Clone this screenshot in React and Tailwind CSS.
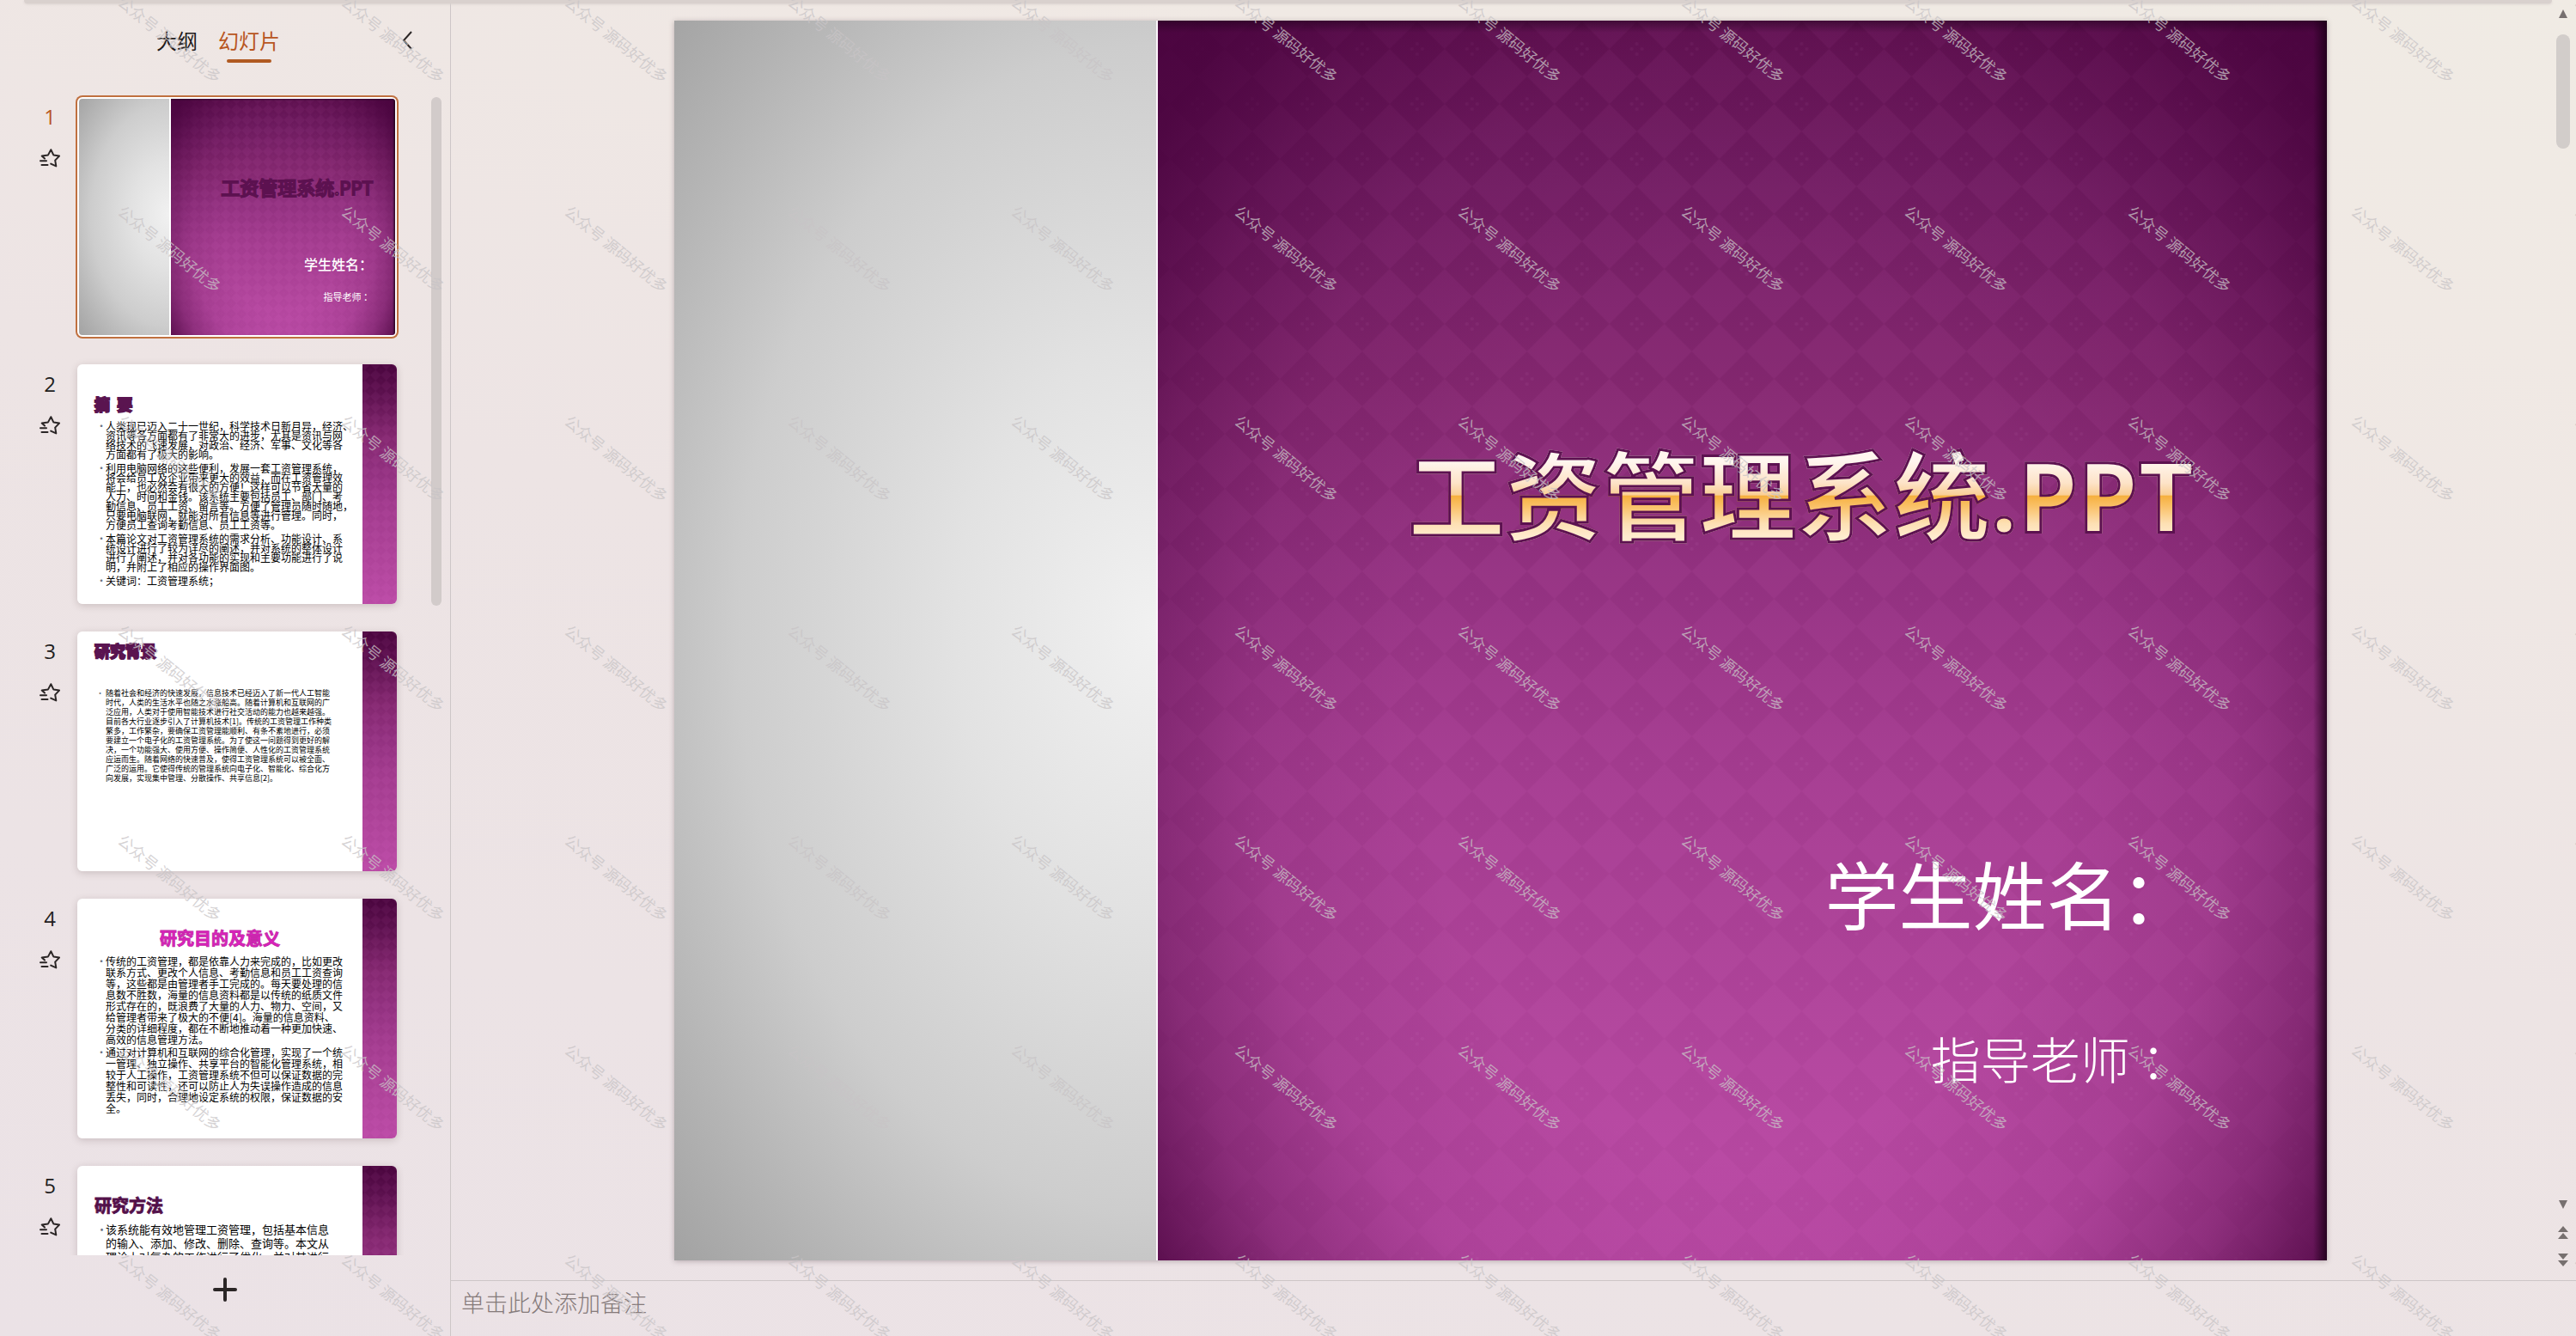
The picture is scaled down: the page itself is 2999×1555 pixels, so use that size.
import React, { useId } from "react";

const WATERMARK_TEXT = "公众号 源码好优多";

const SLIDES = [
  { id: 1, kind: "cover" },
  {
    id: 2,
    title: "摘  要",
    titleClass: "mt-9 pl-5 text-[18px] text-[#4f1046] [-webkit-text-stroke:2px_#5a1450]",
    bodyClass: "mt-2.5 gap-[5px] text-[12px] leading-[11px]",
    paragraphs: [
      [
        "人类现已迈入二十一世纪，科学技术日新月异，经济、",
        "资讯等各方面都有了非常大的进步，尤其是资讯与网",
        "络技术的飞速发展，对政治、经济、军事、文化等各",
        "方面都有了极大的影响。",
      ],
      [
        "利用电脑网络的这些便利，发展一套工资管理系统，",
        "将会给员工及企业带来更大的效益，而在工资管理效",
        "能上，也必然会有很大的方便！这样可以节省大量的",
        "人力、时间和金钱。该系统主要包括员工、部门、考",
        "勤信息、员工工资、留言等。方便了管理员随时随地，",
        "只要电脑联网，就能对所有信息等进行管理。同时，",
        "方便员工查询考勤信息、员工工资等。",
      ],
      [
        "本篇论文对工资管理系统的需求分析、功能设计、系",
        "统设计进行了较为详尽的阐述，并对系统的整体设计",
        "进行了阐述，并对各功能的实现和主要功能进行了说",
        "明，并附上了相应的操作界面图。",
      ],
      ["关键词：工资管理系统；"],
    ],
  },
  {
    id: 3,
    title: "研究背景",
    titleClass: "mt-3 pl-5 text-[18px] text-[#4f1046] [-webkit-text-stroke:2px_#5a1450]",
    bodyClass: "mt-[34px] text-[9px] leading-[11px]",
    paragraphs: [
      [
        "随着社会和经济的快速发展，信息技术已经迈入了新一代人工智能",
        "时代，人类的生活水平也随之水涨船高。随着计算机和互联网的广",
        "泛应用，人类对于使用智能技术进行社交活动的能力也越来越强。",
        "目前各大行业逐步引入了计算机技术[1]。传统的工资管理工作种类",
        "繁多，工作繁杂，要确保工资管理能顺利、有条不紊地进行，必须",
        "要建立一个电子化的工资管理系统。为了使这一问题得到更好的解",
        "决，一个功能强大、使用方便、操作简便、人性化的工资管理系统",
        "应运而生。随着网络的快速普及，使得工资管理系统可以被全面、",
        "广泛的运用。它使得传统的管理系统向电子化、智能化、综合化方",
        "向发展，实现集中管理、分散操作、共享信息[2]。",
      ],
    ],
  },
  {
    id: 4,
    title: "研究目的及意义",
    titleClass: "mt-9 text-center text-[20px] text-[#e01fc0] [-webkit-text-stroke:1px_#c42aa8]",
    bodyClass: "mt-2.5 gap-[2px] text-[12px] leading-[13px]",
    paragraphs: [
      [
        "传统的工资管理，都是依靠人力来完成的，比如更改",
        "联系方式、更改个人信息、考勤信息和员工工资查询",
        "等，这些都是由管理者手工完成的。每天要处理的信",
        "息数不胜数，海量的信息资料都是以传统的纸质文件",
        "形式存在的，既浪费了大量的人力、物力、空间，又",
        "给管理者带来了极大的不便[4]。海量的信息资料、",
        "分类的详细程度，都在不断地推动着一种更加快速、",
        "高效的信息管理方法。",
      ],
      [
        "通过对计算机和互联网的综合化管理，实现了一个统",
        "一管理、独立操作、共享平台的智能化管理系统，相",
        "较于人工操作，工资管理系统不但可以保证数据的完",
        "整性和可读性，还可以防止人为失误操作造成的信息",
        "丢失，同时，合理地设定系统的权限，保证数据的安",
        "全。",
      ],
    ],
  },
  {
    id: 5,
    title: "研究方法",
    titleClass: "mt-9 pl-5 text-[20px] text-[#4f1046] [-webkit-text-stroke:1px_#5a1450]",
    bodyClass: "mt-2.5 text-[13px] leading-[16px]",
    paragraphs: [
      [
        "该系统能有效地管理工资管理，包括基本信息",
        "的输入、添加、修改、删除、查询等。本文从",
        "理论上对复杂的工作进行了优化，并对其进行",
      ],
    ],
  },
];

/* Decorative artwork of the purple theme, shared by cover and content slides. */
function PurpleArt({ viewBox, width, vignette, className }) {
  const id = useId();
  return (
    <svg viewBox={viewBox} preserveAspectRatio="none" className={className} aria-hidden="true">
      <defs>
        <linearGradient id={`${id}-base`} x1="0" y1="0" x2="0" y2="1">
          <stop offset="0" stopColor={vignette ? "#631353" : "#4a053e"} />
          <stop offset="0.12" stopColor={vignette ? "#701c61" : "#5c104e"} />
          <stop offset="0.3" stopColor="#83276f" />
          <stop offset="0.45" stopColor="#923180" />
          <stop offset="0.6" stopColor="#a23b8e" />
          <stop offset="0.85" stopColor="#b1459c" />
          <stop offset="1" stopColor="#ba4aa5" />
        </linearGradient>
        <radialGradient
          id={`${id}-vig`}
          gradientUnits="userSpaceOnUse"
          cx="0"
          cy="0"
          r="1"
          gradientTransform="translate(681 800) scale(950 1300)"
        >
          <stop offset="0" stopColor="#48033d" stopOpacity="0" />
          <stop offset="0.4" stopColor="#48033d" stopOpacity="0" />
          <stop offset="0.6" stopColor="#48033d" stopOpacity="0.12" />
          <stop offset="0.74" stopColor="#48033d" stopOpacity="0.4" />
          <stop offset="0.88" stopColor="#48033d" stopOpacity="0.85" />
          <stop offset="1" stopColor="#48033d" stopOpacity="0.95" />
        </radialGradient>
        <linearGradient id={`${id}-edge`} x1="0" y1="0" x2="1" y2="0">
          <stop offset="0" stopColor="#1c0018" stopOpacity="0" />
          <stop offset="1" stopColor="#1c0018" stopOpacity="0.85" />
        </linearGradient>
        <linearGradient id={`${id}-top`} x1="0" y1="0" x2="0" y2="1">
          <stop offset="0" stopColor="#1c0018" stopOpacity="0.5" />
          <stop offset="1" stopColor="#1c0018" stopOpacity="0" />
        </linearGradient>
        <pattern id={`${id}-dia`} width="64" height="64" x="-18" y="33" patternUnits="userSpaceOnUse">
          <path d="M32 0 64 32 32 64 0 32Z" fill="#ff8cf0" fillOpacity="0.05" />
          <g fill="#ffb0f4" fillOpacity="0.05">
            <circle cx="0" cy="6" r="2" />
            <circle cx="64" cy="6" r="2" />
            <circle cx="6" cy="0" r="2" />
            <circle cx="58" cy="0" r="2" />
            <circle cx="6" cy="64" r="2" />
            <circle cx="58" cy="64" r="2" />
            <circle cx="0" cy="58" r="2" />
            <circle cx="64" cy="58" r="2" />
          </g>
        </pattern>
      </defs>
      <rect width={width} height="1443" fill={`url(#${id}-base)`} />
      <rect width={width} height="1443" fill={`url(#${id}-dia)`} />
      {vignette && (
        <>
          <rect width={width} height="1443" fill={`url(#${id}-vig)`} />
          <rect width={width} height="14" fill={`url(#${id}-top)`} />
          <rect x={width - 16} width="16" height="1443" fill={`url(#${id}-edge)`} />
        </>
      )}
    </svg>
  );
}

function CoverSlide({ large }) {
  return (
    <div className="flex h-full w-full overflow-hidden">
      <div
        className={`h-full shrink-0 bg-[radial-gradient(140%_76%_at_100%_49%,#f1f1f1_0%,#e2e2e2_30%,#cdcdcd_62%,#b5b5b5_82%,#a0a0a0_100%)] ${
          large ? "w-[561px]" : "w-[105px]"
        }`}
      />
      <div className={large ? "h-full w-[2px] bg-[#fbf4fa]" : "h-full w-[2px] bg-white"} />
      <div className="relative h-full flex-1">
        <PurpleArt viewBox="0 0 1362 1443" width={1362} vignette className="absolute inset-0 h-full w-full" />
        {large ? (
          <div className="relative flex h-full flex-col items-end pr-[154px] whitespace-nowrap text-white">
            <h1 className="mt-[482px] bg-[linear-gradient(180deg,#fff6ef_22%,#fde3c8_40%,#f9cf96_50%,#f6b03f_51%,#fac26a_60%,#fde0b4_74%,#ffeccf_85%)] bg-clip-text font-['Noto_Sans','Noto_Sans_CJK_SC',sans-serif] text-[113px] leading-[140px] font-bold text-transparent [-webkit-text-stroke:3px_#5c1150]">
              工资管理系统.PPT
            </h1>
            <p className="mt-[333px] text-[86px] leading-[120px]">学生姓名：</p>
            <p className="mt-[92px] pr-1 text-[58px] leading-[80px] font-light">指导老师 ：</p>
          </div>
        ) : (
          <div className="relative flex h-full flex-col items-end pr-[26px] whitespace-nowrap text-white">
            <h2 className="mt-[88px] font-['Noto_Sans','Noto_Sans_CJK_SC',sans-serif] text-[22px] leading-[30px] text-[#e9a0b0] [-webkit-text-stroke:2px_#5c1150]">
              工资管理系统.PPT
            </h2>
            <p className="mt-[64px] text-[16px] leading-5 font-medium">学生姓名：</p>
            <p className="mt-5 text-[11px] leading-4">指导老师 ：</p>
          </div>
        )}
      </div>
    </div>
  );
}

function ContentSlide({ slide }) {
  return (
    <div className="flex h-full w-full overflow-hidden">
      <div className="flex h-full min-w-0 flex-1 flex-col bg-white">
        <h2 className={`leading-5 font-bold whitespace-pre ${slide.titleClass}`}>{slide.title}</h2>
        <ul className={`flex flex-col pl-[22px] whitespace-nowrap text-black ${slide.bodyClass}`}>
          {slide.paragraphs.map((lines, i) => (
            <li key={i} className="flex">
              <span className="w-[11px] shrink-0 text-gray-500">·</span>
              <p>
                {lines.map((line, j) => (
                  <span key={j} className="block">
                    {line}
                  </span>
                ))}
              </p>
            </li>
          ))}
        </ul>
      </div>
      <PurpleArt viewBox="0 0 205 1443" width={205} className="h-full w-10 shrink-0" />
    </div>
  );
}

function AnimationStar() {
  return (
    <svg
      viewBox="0 0 24 22"
      className="h-[22px] w-6"
      fill="none"
      stroke="#2b2626"
      strokeWidth="2"
      strokeLinecap="round"
      strokeLinejoin="round"
      aria-hidden="true"
    >
      <path d="M6 11.6 2.7 8.6 10 7.4 13.3 1.2 16.4 7.6 23 8.6 18.2 13.6 19.3 20.4 13.2 17.6" />
      <path d="M1 14.3h7M2.500 19h7" />
    </svg>
  );
}

function SlideRow({ slide, active }) {
  return (
    <li className="flex gap-[3px] pl-[29px]">
      <div className="flex w-[58px] shrink-0 flex-col items-center">
        <span
          className={`mt-[5px] font-['Open_Sans','Noto_Sans',sans-serif] text-[24px] leading-9 ${
            active ? "text-[#b8561e]" : "text-[#221e1e]"
          }`}
        >
          {slide.id}
        </span>
        <button type="button" aria-label={`动画 ${slide.id}`} className="mt-[19px]">
          <AnimationStar />
        </button>
      </div>
      <div
        role="button"
        tabIndex={0}
        aria-label={`幻灯片 ${slide.id}`}
        className={
          active
            ? "h-[279px] w-[372px] overflow-hidden rounded-md border-2 border-white bg-white ring-2 ring-[#c0703f]"
            : "h-[279px] w-[372px] overflow-hidden rounded-md shadow-[0_2px_8px_rgba(80,60,60,0.22)]"
        }
      >
        {slide.kind === "cover" ? <CoverSlide /> : <ContentSlide slide={slide} />}
      </div>
    </li>
  );
}

function Sidebar() {
  return (
    <aside className="flex h-full w-[524px] shrink-0 flex-col">
      <header className="flex h-[113px] shrink-0 items-start pt-[30px] pr-[42px] pl-[182px]">
        <nav className="flex gap-6 leading-[34px]">
          <button type="button" className="self-start text-[24px] text-[#1f1b1b]">
            大纲
          </button>
          <button type="button" className="flex flex-col items-center text-[24px] text-[#b8561e]">
            幻灯片
            <span className="mt-[5px] h-1 w-[52px] rounded-full bg-[#b05a22]" />
          </button>
        </nav>
        <button type="button" aria-label="收起" className="mt-[6px] ml-auto">
          <svg viewBox="0 0 16 22" className="h-[22px] w-4" fill="none" stroke="#2b2626" strokeWidth="2" aria-hidden="true">
            <path d="M13 1 4 11 13 21" />
          </svg>
        </button>
      </header>
      <div className="flex min-h-0 flex-1 justify-between pr-[10px]">
        <ul className="-mt-1 flex flex-col gap-8 overflow-hidden pt-1 pr-2">
          {SLIDES.map((slide) => (
            <SlideRow key={slide.id} slide={slide} active={slide.id === 1} />
          ))}
        </ul>
        <div className="h-[592px] w-3 rounded-full bg-[#d2cbca]" />
      </div>
      <footer className="flex h-[94px] shrink-0 items-start justify-center pt-[26px]">
        <button type="button" aria-label="新建幻灯片">
          <svg viewBox="0 0 28 28" className="h-7 w-7" stroke="#2b2626" strokeWidth="4" strokeLinecap="round" aria-hidden="true">
            <path d="M14 2v24M2 14h24" />
          </svg>
        </button>
      </footer>
    </aside>
  );
}

function RailButton({ label, d, className }) {
  return (
    <button type="button" aria-label={label} className={className}>
      <svg viewBox="0 0 12 16" className="h-4 w-3" fill="#77706f" aria-hidden="true">
        <path d={d} />
      </svg>
    </button>
  );
}

function ScrollRail() {
  return (
    <div className="flex h-full w-[30px] shrink-0 flex-col items-center">
      <RailButton label="向上滚动" d="M6 3 11 13H1Z" className="mt-2" />
      <div className="mt-4 h-[133px] w-4 rounded-full bg-[#d2cdca]" />
      <RailButton label="向下滚动" d="M6 13 11 3H1Z" className="mt-auto" />
      <RailButton label="上一张幻灯片" d="M6 0 12 7H0ZM6 8 12 15H0Z" className="mt-[17px]" />
      <RailButton label="下一张幻灯片" d="M0 1H12L6 8ZM0 9H12L6 16Z" className="mt-[15px] mb-4" />
    </div>
  );
}

function Watermark() {
  return (
    <div className="pointer-events-none absolute inset-0 overflow-hidden" aria-hidden="true">
      <div className="-mt-[77px] ml-[68px] grid auto-rows-[244px] grid-cols-[repeat(12,260px)]">
        {Array.from({ length: 84 }, (_, i) => (
          <div key={i} className="flex items-center justify-center">
            <span className="rotate-[39deg] text-[18px] whitespace-nowrap text-[#c8c4c6]/75">{WATERMARK_TEXT}</span>
          </div>
        ))}
      </div>
    </div>
  );
}

export default function App() {
  return (
    <div className="relative flex h-screen w-full overflow-hidden bg-[linear-gradient(195deg,#f0ebe4_0%,#f0e9e4_18%,#ede4e4_50%,#ebe2e6_100%)] font-['Noto_Sans_CJK_SC',sans-serif]">
      <div className="pointer-events-none absolute inset-x-7 top-0 h-1 rounded-b-lg bg-[#d9d1ce] shadow-[0_1px_3px_#d9d1ce]" />
      <Sidebar />
      <main className="flex h-full min-w-0 flex-1 flex-col border-l border-[#cdc6c7]">
        <section className="flex min-h-0 flex-1">
          <div className="flex min-w-0 flex-1 justify-center pt-6 pr-[1px] pb-[23px]">
            <div className="aspect-[4/3] h-full shadow-[0_1px_6px_rgba(80,60,70,0.35)]">
              <CoverSlide large />
            </div>
          </div>
          <ScrollRail />
        </section>
        <label className="block h-[65px] shrink-0 border-t border-[#cdc6c7]">
          <span className="sr-only">备注</span>
          <input
            type="text"
            placeholder="单击此处添加备注"
            className="h-12 w-full bg-transparent pl-3 text-[27px] font-light text-[#5f5555] outline-none placeholder:text-[#857a7a]"
          />
        </label>
      </main>
      <Watermark />
    </div>
  );
}
